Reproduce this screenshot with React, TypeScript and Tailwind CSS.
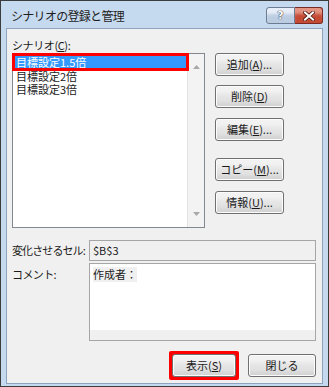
const font = { fontFamily: '"Noto Sans CJK JP", "Noto Sans", sans-serif' };

const btnCls =
  "flex items-center justify-center h-[23px] rounded-[3px] border border-[#707070] bg-[#e3e3e3] shadow-[inset_0_0_0_1px_#fcfcfc,inset_0_10px_4px_-2px_#f2f2f2,inset_0_-6px_4px_-2px_#d2d2d2] text-[11px] text-[#1a1a1a]";

function Btn({ label, u, rest = "", className = "" }: { label: string; u: string; rest?: string; className?: string }) {
  return (
    <div className={`${btnCls} ${className}`}>
      <span>
        {label}(<span className="underline">{u}</span>){rest}
      </span>
    </div>
  );
}

export default function App() {
  const items = ["目標設定1.5倍", "目標設定2倍", "目標設定3倍"];
  return (
    <div style={font} className="w-[329px] h-[387px] bg-[#3c3c3c] p-px">
      <div className="w-full h-full bg-[#c6daef] flex flex-col px-[5px] pb-[2px]">
        {/* title bar */}
        <div className="h-[27px] flex items-start">
          <span className="mt-[6px] ml-[5px] text-[12px] tracking-[-0.7px] text-[#1e1e1e] whitespace-nowrap">シナリオの登録と管理</span>
          <div className="ml-auto mt-[6px] flex">
            <div className="w-[29px] h-[17px] rounded-l-[3px] border border-[#6b7c93] bg-[#bccde2] shadow-[inset_0_7px_3px_-1px_#e8eef7] flex items-center justify-center">
              <span
                className="text-[11px] leading-none font-bold text-white [text-shadow:0_0_1px_#223,0_0_1px_#223]"
                style={{ fontFamily: '"DejaVu Sans", sans-serif' }}
              >
                ?
              </span>
            </div>
            <div className="w-[28px] h-[17px] rounded-r-[3px] border border-l-0 border-[#7a2a22] bg-[#c44a33] shadow-[inset_0_7px_3px_-1px_#e39482] flex items-center justify-center">
              <svg width="12" height="10" viewBox="0 0 12 10">
                <path d="M2 1.5 L10 8.5 M10 1.5 L2 8.5" stroke="#4a1a12" strokeWidth="3.6" strokeLinecap="square" />
                <path d="M2 1.5 L10 8.5 M10 1.5 L2 8.5" stroke="#fff" strokeWidth="2" strokeLinecap="square" />
              </svg>
            </div>
          </div>
        </div>
        {/* content */}
        <div className="flex-1 border border-[#8ea3bd] bg-[#f0f0f0] px-[5px] flex flex-col text-[11px] text-[#1a1a1a]">
          <div className="mt-[9px] h-[15px] leading-[15px] tracking-[-0.4px]">
            シナリオ(<span className="underline">C</span>):
          </div>
          <div className="flex gap-[10px]">
            <div className="relative w-[193px] h-[175px] border border-[#828790] bg-white flex">
              <div className="flex-1 pt-[2px] pl-[1px]">
                {items.map((t, i) => (
                  <div
                    key={t}
                    className={`h-[13.5px] leading-[13.5px] pl-[2px] ${i === 0 ? "bg-[#3399ff] text-white mr-[1px]" : ""}`}
                  >
                    {t}
                  </div>
                ))}
              </div>
              <div className="w-[17px] bg-[#f3f3f3] border-l border-[#e3e3e3] flex flex-col items-center justify-between py-[11px]">
                <svg width="7" height="4" viewBox="0 0 7 4">
                  <path d="M0 4 L3.5 0 L7 4 Z" fill="#a8a8a8" />
                </svg>
                <svg width="7" height="4" viewBox="0 0 7 4">
                  <path d="M0 0 L3.5 4 L7 0 Z" fill="#a8a8a8" />
                </svg>
              </div>
              <div className="absolute left-[-1px] top-[-1px] w-[177px] h-[18px] border-[3px] border-[#ff0000]" />
            </div>
            <div className="w-[69px] flex flex-col">
              <Btn label="追加" u="A" rest="..." />
              <Btn label="削除" u="D" className="mt-[9px]" />
              <Btn label="編集" u="E" rest="..." className="mt-[10px]" />
              <Btn label="コピー" u="M" rest="..." className="mt-[17px]" />
              <Btn label="情報" u="U" rest="..." className="mt-[10px]" />
            </div>
          </div>
          <div className="mt-[12px] flex items-center">
            <span className="w-[77px] whitespace-nowrap tracking-[-0.9px]">変化させるセル:</span>
            <div className="w-[227px] h-[21px] border border-[#a6a6a6] bg-[#f0f0f0] px-[3px] leading-[19px]">$B$3</div>
          </div>
          <div className="mt-[2px] flex items-start">
            <span className="w-[77px] mt-[3px] whitespace-nowrap tracking-[-0.6px]">コメント:</span>
            <div className="w-[227px] h-[78px] border border-[#a6a6a6] bg-white px-[3px] pt-[3px] flex flex-col">
              <span className="self-start bg-[#f0f0f0] leading-[15px]">作成者：</span>
              <div className="mt-auto h-[10px] bg-[#f0f0f0] -mx-[3px]" />
            </div>
          </div>
          <div className="mt-[13px] flex justify-end gap-[9px] pr-px">
            <div className="p-[3px] bg-[#ff0000] rounded-[2px] -my-[3px]">
              <Btn label="表示" u="S" className="w-[64px]" />
            </div>
            <div className={`${btnCls} w-[68px]`}>閉じる</div>
          </div>
        </div>
      </div>
    </div>
  );
}
